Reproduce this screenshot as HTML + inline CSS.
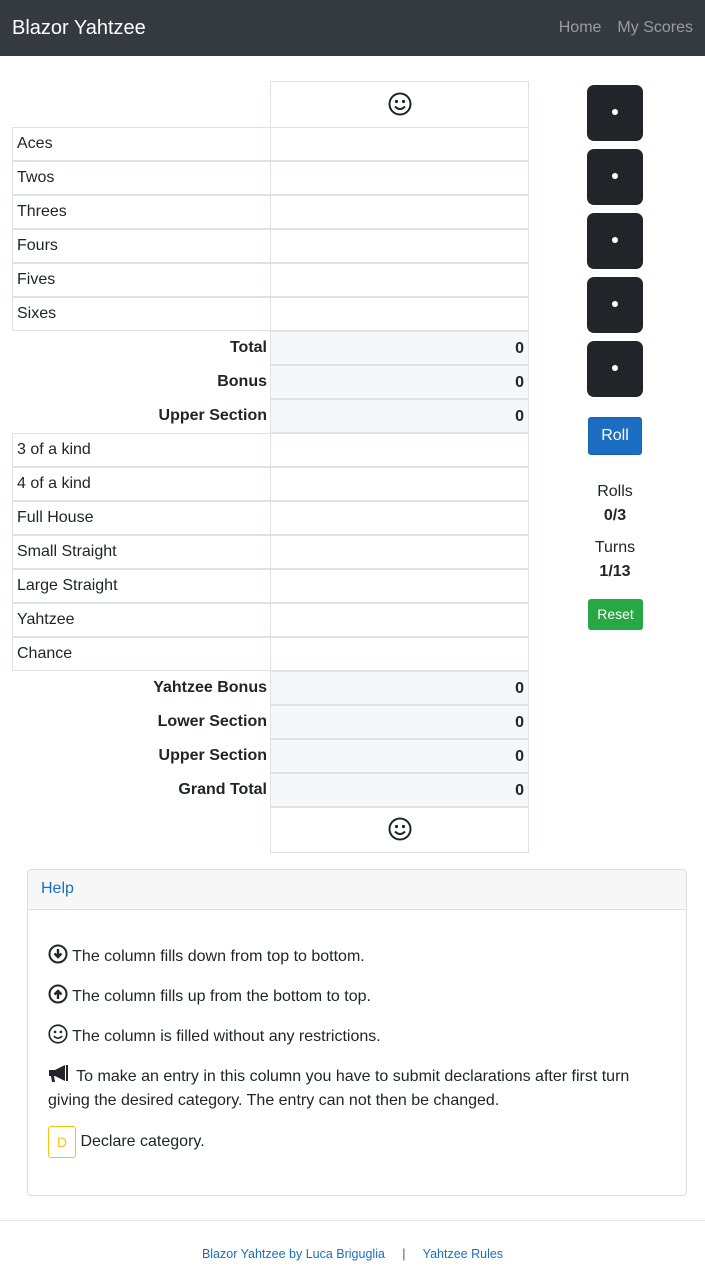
<!DOCTYPE html>
<html><head><meta charset="utf-8"><style>
*{box-sizing:border-box;margin:0;padding:0}
body{width:705px;height:1283px;font-family:"Liberation Sans",Arial,sans-serif;font-size:16px;color:#212529;background:#fff;position:relative;overflow:hidden}
.nav{height:56px;background:#343a40;display:flex;align-items:center;padding:0 12px}
.brand{color:#fff;font-size:20px}
.links{margin-left:auto;color:#9a9da0;font-size:16px}
.links span{margin-left:16px}
.r{position:absolute;height:34px;left:12px;width:517px}
.l{position:absolute;left:0;top:0;width:259px;height:34px;border:1px solid #dee2e6;padding:7px 4px;line-height:18px}
.v{position:absolute;left:258px;top:0;width:259px;height:34px;border:1px solid #dee2e6}
.t .l{border:none;text-align:right;font-weight:bold;padding:8px 4px 0 4px}
.t .v{background:#f6f7f9;text-align:right;font-weight:bold;padding:8px 4px;line-height:18px}
.die{position:absolute;left:587px;width:56px;height:56px;background:#212529;border-radius:7px}
.die::after{content:"";position:absolute;left:25px;top:24px;width:6px;height:6px;border-radius:50%;background:#fff}
.c{position:absolute;left:560px;width:110px;text-align:center}
</style></head><body>
<svg width="0" height="0" style="position:absolute"><symbol id="sm" viewBox="0 0 24 24"><circle cx="12" cy="12" r="10.5" fill="none" stroke="#212529" stroke-width="2"/><circle cx="8.5" cy="9.5" r="1.6" fill="#212529"/><circle cx="15.5" cy="9.5" r="1.6" fill="#212529"/><path d="M7 14.5q5 5 10 0" fill="none" stroke="#212529" stroke-width="2"/></symbol></svg>
<div class="nav"><span class="brand">Blazor Yahtzee</span><span class="links"><span>Home</span><span>My Scores</span></span></div>

<div style="position:absolute;left:270px;top:81px;width:259px;height:47px;border:1px solid #dee2e6;text-align:center;padding-top:10px"><svg width="24" height="24"><use href="#sm"/></svg></div>

<div class="r" style="top:127px"><div class="l">Aces</div><div class="v"></div></div>
<div class="r" style="top:161px"><div class="l">Twos</div><div class="v"></div></div>
<div class="r" style="top:195px"><div class="l">Threes</div><div class="v"></div></div>
<div class="r" style="top:229px"><div class="l">Fours</div><div class="v"></div></div>
<div class="r" style="top:263px"><div class="l">Fives</div><div class="v"></div></div>
<div class="r" style="top:297px"><div class="l">Sixes</div><div class="v"></div></div>
<div class="r t" style="top:331px"><div class="l">Total</div><div class="v">0</div></div>
<div class="r t" style="top:365px"><div class="l">Bonus</div><div class="v">0</div></div>
<div class="r t" style="top:399px"><div class="l">Upper Section</div><div class="v">0</div></div>
<div class="r" style="top:433px"><div class="l">3 of a kind</div><div class="v"></div></div>
<div class="r" style="top:467px"><div class="l">4 of a kind</div><div class="v"></div></div>
<div class="r" style="top:501px"><div class="l">Full House</div><div class="v"></div></div>
<div class="r" style="top:535px"><div class="l">Small Straight</div><div class="v"></div></div>
<div class="r" style="top:569px"><div class="l">Large Straight</div><div class="v"></div></div>
<div class="r" style="top:603px"><div class="l">Yahtzee</div><div class="v"></div></div>
<div class="r" style="top:637px"><div class="l">Chance</div><div class="v"></div></div>
<div class="r t" style="top:671px"><div class="l">Yahtzee Bonus</div><div class="v">0</div></div>
<div class="r t" style="top:705px"><div class="l">Lower Section</div><div class="v">0</div></div>
<div class="r t" style="top:739px"><div class="l">Upper Section</div><div class="v">0</div></div>
<div class="r t" style="top:773px"><div class="l">Grand Total</div><div class="v">0</div></div>
<div style="position:absolute;left:270px;top:807px;width:259px;height:46px;border:1px solid #dee2e6;text-align:center;padding-top:9px"><svg width="24" height="24"><use href="#sm"/></svg></div>

<div class="die" style="top:85px"></div>
<div class="die" style="top:149px"></div>
<div class="die" style="top:213px"></div>
<div class="die" style="top:277px"></div>
<div class="die" style="top:341px"></div>
<div style="position:absolute;left:588px;top:417px;width:54px;height:38px;background:#1b6ec2;border:1px solid #1861ac;border-radius:3px;color:#fff;text-align:center;line-height:36px">Roll</div>
<div class="c" style="top:483px">Rolls</div>
<div class="c" style="top:507px;font-weight:bold">0/3</div>
<div class="c" style="top:539px">Turns</div>
<div class="c" style="top:563px;font-weight:bold">1/13</div>
<div style="position:absolute;left:588px;top:599px;width:55px;height:31px;background:#28a745;border-radius:3px;color:#fff;text-align:center;line-height:31px;font-size:14px">Reset</div>

<div style="position:absolute;left:27px;top:869px;width:660px;height:327px;border:1px solid #dfdfdf;border-radius:4px;overflow:hidden">
<div style="height:40px;background:#f7f7f7;border-bottom:1px solid #dfdfdf;padding:10px 13px;color:#1b6ec2;line-height:18px">Help</div>
<div style="position:absolute;left:20px;top:74px;line-height:24px;width:620px">
<div style="position:absolute;top:0;white-space:nowrap"><svg width="20" height="20" viewBox="0 0 20 20" style="vertical-align:-3px"><circle cx="10" cy="10" r="8.5" fill="none" stroke="#212529" stroke-width="2"/><path d="M10 5v7M6.5 9.5L10 13l3.5-3.5" stroke="#212529" stroke-width="2.4" fill="none"/></svg> The column fills down from top to bottom.</div>
<div style="position:absolute;top:40px;white-space:nowrap"><svg width="20" height="20" viewBox="0 0 20 20" style="vertical-align:-3px"><circle cx="10" cy="10" r="8.5" fill="none" stroke="#212529" stroke-width="2"/><path d="M10 15V8M6.5 10.5L10 7l3.5 3.5" stroke="#212529" stroke-width="2.4" fill="none"/></svg> The column fills up from the bottom to top.</div>
<div style="position:absolute;top:80px;white-space:nowrap"><svg width="20" height="20" style="vertical-align:-3px"><use href="#sm" width="20" height="20"/></svg> The column is filled without any restrictions.</div>
<div style="position:absolute;top:120px"><svg width="24" height="20" viewBox="0 0 24 20" style="vertical-align:-3px"><path d="M1 6h6l10-5v16L7 12H6l1 6H4L3 12H1z" fill="#212529"/><rect x="18" y="1" width="2" height="16" fill="#212529"/></svg> To make an entry in this column you have to submit declarations after first turn giving the desired category. The entry can not then be changed.</div>
<div style="position:absolute;top:182px;white-space:nowrap"><span style="display:inline-block;width:28px;height:32px;border:1px solid #ffc107;border-radius:3px;color:#ffc107;text-align:center;line-height:30px;font-size:14px;vertical-align:middle">D</span> Declare category.</div>
</div></div>

<div style="position:absolute;left:0;top:1220px;width:705px;border-top:1px solid #e5e5e5"></div>
<div style="position:absolute;left:0;top:1247px;width:705px;text-align:center;font-size:12.5px;color:#1b6ec2">Blazor Yahtzee by Luca Briguglia &nbsp;&nbsp;&nbsp; <span style="color:#555">|</span> &nbsp;&nbsp;&nbsp; Yahtzee Rules</div>
</body></html>
